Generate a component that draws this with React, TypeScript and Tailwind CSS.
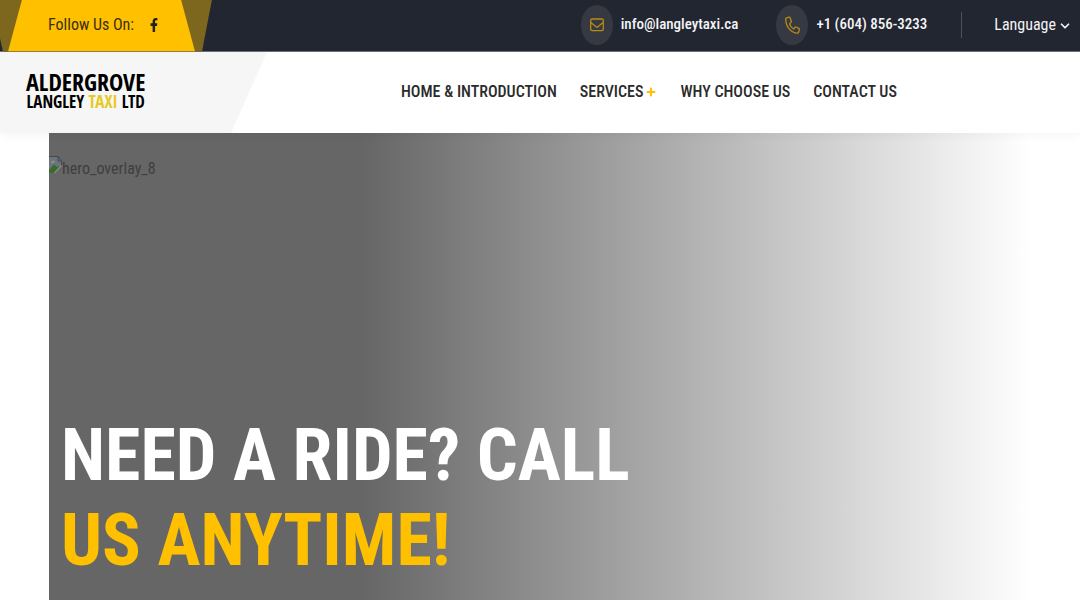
import { ChevronDown, Plus } from "lucide-react";
import { FaFacebookF } from "react-icons/fa";

const navLinks = [
  { label: "HOME & INTRODUCTION", href: "#home" },
  { label: "SERVICES", href: "#services", more: true },
  { label: "WHY CHOOSE US", href: "#why" },
  { label: "CONTACT US", href: "#contact" },
];

function EnvelopeIcon() {
  return (
    <svg className="h-[14px] w-[14px]" viewBox="0 0 14 14" fill="none" stroke="currentColor" strokeWidth="1.3" aria-hidden="true">
      <rect x="0.7" y="1" width="12.6" height="11.6" rx="1.4" />
      <path d="M0.8 4.4 L5.8 8.6 Q7 9.4 8.2 8.6 L13.2 4.4" />
    </svg>
  );
}

function PhoneIcon() {
  return (
    <svg className="h-[18px] w-[15px]" viewBox="0 0 15 18" fill="none" stroke="currentColor" strokeWidth="1.3" strokeLinejoin="round" aria-hidden="true">
      <path d="M1.2 2.1 L4.1 1.2 Q4.8 1 5.1 1.8 L6.3 5.2 Q6.5 5.9 6 6.4 L4.5 7.9 Q6 11.2 8.6 13 L9.9 11.3 Q10.4 10.7 11.1 11 L13.8 12.4 Q14.5 12.8 14.3 13.6 L13.6 16.4 Q13.4 17.2 12.6 17.2 C6 17 0.7 10.6 0.7 3 Q0.7 2.3 1.2 2.1 Z" />
    </svg>
  );
}

function BrokenImageIcon() {
  return (
    <svg className="mb-2 h-[18px] w-[13px] shrink-0" viewBox="0 0 13 18" aria-hidden="true">
      <path d="M0 0.5 H9 L12.5 5 V9 L5 17 H0 Z" fill="#6a747d" />
      <path d="M0 14 L5 8.5 L8 11 L11 10 L5 17 H0 Z" fill="#3a6b2c" />
      <path d="M2 6 Q4 3.5 6 5.5 L5 7 H2 Z" fill="#8c8f92" />
      <path d="M12.5 9.5 L5.5 17" stroke="#8a8a8a" strokeWidth="1.2" />
      <path d="M0 0.5 H9 L12.5 5 V9 M9 0.5 V5 H12.5" fill="none" stroke="#484848" />
    </svg>
  );
}

function TopBar() {
  return (
    <div className="flex h-[52px] items-center justify-between border-b border-[#6d7078] bg-[#222631] pr-2 text-[15px] text-[#f4f4f6]">
      <div className="h-[52px] w-[212px] bg-[#7d661e] [clip-path:polygon(0_0,100%_0,202px_100%,3px_100%,0_75%)]">
        <div className="flex h-full items-center gap-4 bg-[#ffc000] pb-[2px] pl-12 text-[#3b2f10] [clip-path:polygon(22px_0,181px_0,195px_100%,8px_100%)]">
          <span className="text-[16px]">Follow Us On:</span>
          <a href="#facebook" aria-label="Facebook">
            <FaFacebookF className="h-[14px] w-2 text-[#222222]" preserveAspectRatio="none" />
          </a>
        </div>
      </div>
      <div className="flex items-center pb-[2px] font-medium">
        <a href="mailto:info@langleytaxi.ca" className="flex items-center gap-2">
          <span className="flex h-10 w-8 items-center justify-center rounded-[50%] bg-[#363942] text-[#b58d14]">
            <EnvelopeIcon />
          </span>
          info@langleytaxi.ca
        </a>
        <a href="tel:+16048563233" className="ml-[38px] flex items-center gap-2">
          <span className="flex h-10 w-8 items-center justify-center rounded-[50%] bg-[#363942] text-[#b58d14]">
            <PhoneIcon />
          </span>
          +1 (604) 856-3233
        </a>
        <span className="ml-[34px] h-[26px] w-px bg-[#4d515b]" />
        <button type="button" className="ml-8 flex items-center gap-[2px]">
          <span className="text-[16px] font-normal">Language</span>
          <ChevronDown className="mt-[2px] h-[14px] w-[14px]" strokeWidth={3} />
        </button>
      </div>
    </div>
  );
}

function Header() {
  return (
    <header className="relative z-10 flex h-[81px] items-center bg-white shadow-[0_4px_8px_rgba(0,0,0,0.03)]">
      <div className="flex h-full w-[267px] items-center bg-[#f6f6f6] pb-[6px] pl-[26px] [clip-path:polygon(0_0,100%_0,231px_100%,0_100%)]">
        <a href="#home" className="flex flex-col text-center font-['Open_Sans_Condensed','Open_Sans',sans-serif] font-bold text-black">
          <span className="text-[24px] leading-[24px]">ALDERGROVE</span>
          <span className="text-[17px] leading-[16px]">
            LANGLEY <span className="text-[#e8c91c]">TAXI</span> LTD
          </span>
        </a>
      </div>
      <nav className="ml-[134px] flex items-center gap-[23px] pb-[2px] text-[16px] font-medium text-[#2b2b2b]">
        {navLinks.map((link) => (
          <a key={link.label} href={link.href} className="flex items-center gap-[2px] whitespace-nowrap">
            {link.label}
            {link.more && <Plus className="h-3 w-3 text-[#ffc000]" strokeWidth={4} />}
          </a>
        ))}
      </nav>
    </header>
  );
}

function Hero() {
  return (
    <section className="mr-[50px] ml-[49px] flex flex-col bg-[linear-gradient(90deg,#666666_32%,#ffffff_100%)] pt-[22px]">
      <div className="flex h-[28px] items-center text-[16px] text-[#3f3f3f]">
        <BrokenImageIcon />
        <span>hero_overlay_8</span>
      </div>
      <h1 className="pt-[230px] pb-[17px] pl-3 text-[72px] leading-[85px] font-bold text-white">
        NEED A RIDE? CALL
        <br />
        <span className="text-[#ffc000]">US ANYTIME!</span>
      </h1>
    </section>
  );
}

export default function App() {
  return (
    <div className="bg-white font-['Roboto_Condensed','Roboto',sans-serif]">
      <TopBar />
      <Header />
      <main>
        <Hero />
      </main>
    </div>
  );
}
